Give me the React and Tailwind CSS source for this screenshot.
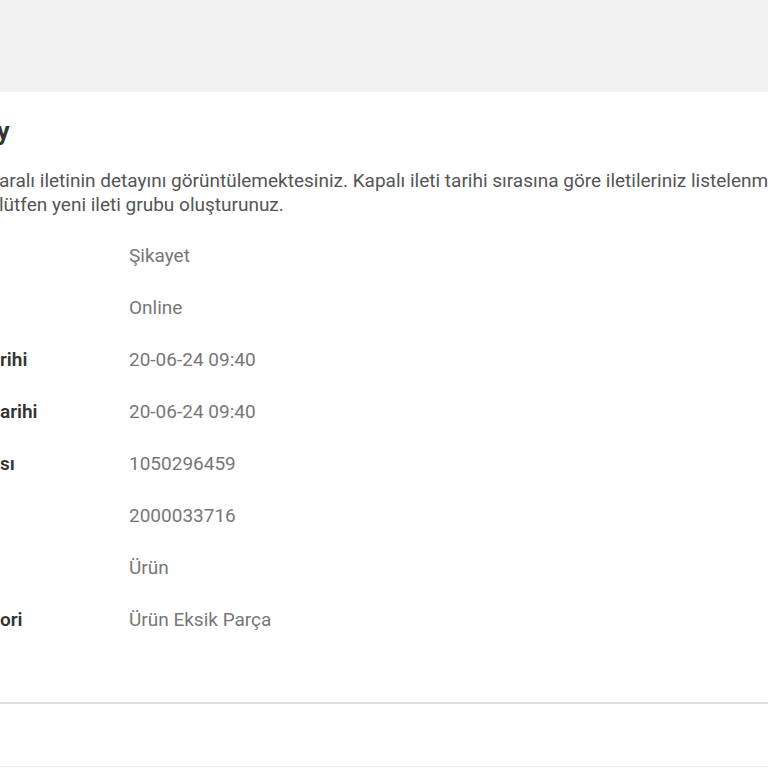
import React from 'react';

const rows = [
    { label: '', value: 'Şikayet' },
    { label: '', value: 'Online' },
    { label: 'rihi', value: '20-06-24 09:40' },
    { label: 'arihi', value: '20-06-24 09:40' },
    { label: 'sı', value: '1050296459' },
    { label: '', value: '2000033716' },
    { label: '', value: 'Ürün' },
    { label: 'ori', value: 'Ürün Eksik Parça' },
];

const App = () => {
    return (
        <div className="w-[768px] h-[768px] overflow-hidden bg-white" style={{ fontFamily: 'Roboto, "Noto Sans", sans-serif' }}>
            <div className="h-[92px] bg-[#f2f2f2]" />

            <div className="pt-[22px]">
                <h1 className="text-[25px] leading-[36px] font-bold text-[#333] -ml-[3px]">y</h1>

                <div className="mt-[19px] text-[19px] leading-[24px] text-[#555] whitespace-nowrap">
                    <p className="-ml-[1px]">aralı iletinin detayını görüntülemektesiniz. Kapalı ileti tarihi sırasına göre iletileriniz listelenmektedir.</p>
                    <p className="-ml-[1px]">lütfen yeni ileti grubu oluşturunuz.</p>
                </div>

                <div className="mt-[13px]">
                    {rows.map((row, i) => (
                        <div key={i} className="flex items-center h-[52px] text-[19px]">
                            <div className="w-[129px] font-semibold text-[#333]">{row.label}</div>
                            <div className="text-[#777]">{row.value}</div>
                        </div>
                    ))}
                </div>
            </div>

            <div className="mt-[56px] border-t-2 border-[#dedede]" />
            <div className="h-[62px]" />
            <div className="border-t border-[#ececec]" />
        </div>
    );
};

export default App;
